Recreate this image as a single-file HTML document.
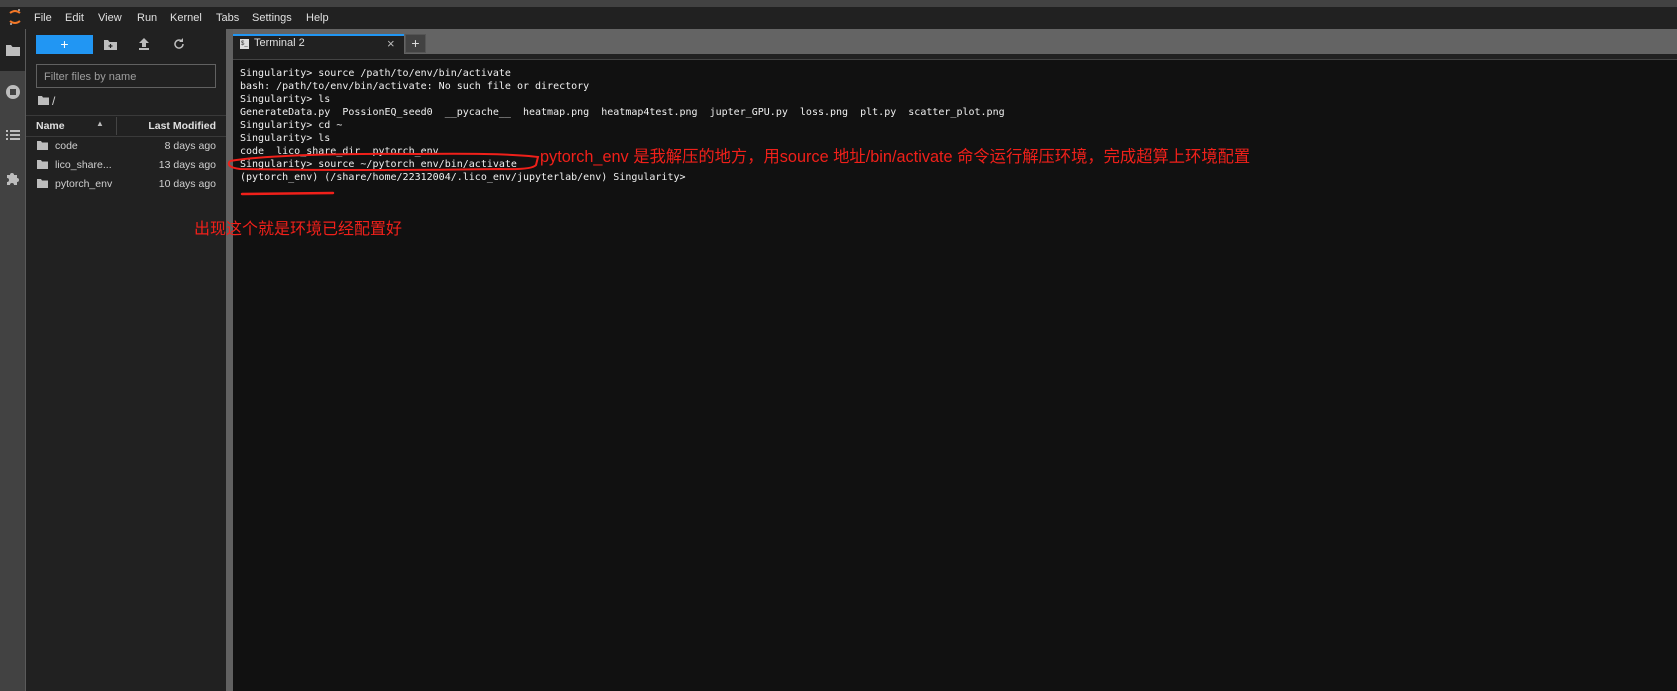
<!DOCTYPE html>
<html><head><meta charset="utf-8"><style>
*{margin:0;padding:0;box-sizing:border-box}
body{width:1677px;height:691px;overflow:hidden;background:#111;font-family:"Liberation Sans","Noto Sans CJK SC",sans-serif;position:relative}
.a{position:absolute}
.menu span{position:absolute;top:12px;font-size:11px;color:#e0e0e0}
.term{position:absolute;left:240px;top:67px;font-family:"DejaVu Sans Mono","Liberation Mono",monospace;font-size:10px;line-height:13px;color:#f0f0f0;white-space:pre}
.f{position:absolute;font-size:10.5px;color:#d0d0d0}
.red{color:#f0201a;position:absolute;font-family:"Liberation Sans","Noto Sans CJK SC",sans-serif;white-space:nowrap}
</style></head><body>
<div class="a" style="left:0;top:0;width:1677px;height:7px;background:#424242"></div>
<div class="a" style="left:0;top:7px;width:1677px;height:22px;background:#212121"></div>
<svg class="a" style="left:8px;top:8px" width="14" height="18" viewBox="0 0 14 18"><path d="M2 5 Q7 1 12 5" stroke="#f37726" stroke-width="2" fill="none"/><path d="M2 13 Q7 17 12 13" stroke="#f37726" stroke-width="2" fill="none"/><circle cx="11" cy="2" r="1" fill="#bbb"/><circle cx="3" cy="16" r="1" fill="#bbb"/></svg>
<div class="menu"><span style="left:34px">File</span><span style="left:65px">Edit</span><span style="left:98px">View</span><span style="left:137px">Run</span><span style="left:170px">Kernel</span><span style="left:216px">Tabs</span><span style="left:252px">Settings</span><span style="left:306px">Help</span></div>
<div class="a" style="left:0;top:29px;width:25px;height:662px;background:#424242"></div>
<div class="a" style="left:0;top:29px;width:25px;height:42px;background:#212121"></div>
<div class="a" style="left:25px;top:29px;width:1px;height:662px;background:#5a5a5a"></div>
<svg class="a" style="left:6px;top:44px" width="14" height="12"><path d="M0 1h5l1.5 2H14v9H0z" fill="#bdbdbd"/></svg>
<svg class="a" style="left:5px;top:84px" width="16" height="16"><circle cx="8" cy="8" r="7" fill="#bdbdbd"/><rect x="5" y="5" width="6" height="6" fill="#424242"/></svg>
<svg class="a" style="left:6px;top:129px" width="14" height="12" fill="#bdbdbd"><rect x="0" y="1" width="2" height="2"/><rect x="4" y="1" width="10" height="2"/><rect x="0" y="5" width="2" height="2"/><rect x="4" y="5" width="10" height="2"/><rect x="0" y="9" width="2" height="2"/><rect x="4" y="9" width="10" height="2"/></svg>
<svg class="a" style="left:5px;top:171px" width="15" height="15" fill="#bdbdbd"><path d="M2 4h3a2 2 0 1 1 4 0h3v3a2 2 0 1 1 0 4v3H9a2 2 0 1 0-4 0H2v-3a2 2 0 1 0 0-4z"/></svg>
<div class="a" style="left:26px;top:29px;width:201px;height:662px;background:#212121"></div>
<div class="a" style="left:36px;top:35px;width:57px;height:19px;background:#2196f3;color:#fff;font-size:14px;text-align:center;line-height:19px">+</div>
<svg class="a" style="left:104px;top:39px" width="13" height="11"><path d="M0 1h4l1.5 2H13v8H0z" fill="#bdbdbd"/><path d="M6.5 5v4M4.5 7h4" stroke="#212121" stroke-width="1.2"/></svg>
<svg class="a" style="left:139px;top:38px" width="10" height="12"><path d="M5 0L0 5h3v4h4V5h3z M0 10h10v2H0z" fill="#bdbdbd"/></svg>
<svg class="a" style="left:173px;top:38px" width="12" height="12"><path d="M10 6a4 4 0 1 1-1.2-2.8" stroke="#bdbdbd" stroke-width="1.5" fill="none"/><path d="M10 0v4H6z" fill="#bdbdbd"/></svg>
<div class="a" style="left:36px;top:64px;width:180px;height:24px;border:1px solid #616161;color:#9e9e9e;font-size:11px;padding:6px 7px">Filter files by name</div>
<svg class="a" style="left:38px;top:96px" width="11" height="9"><path d="M0 0h4l1 1.5H11V9H0z" fill="#bdbdbd"/></svg>
<div class="f" style="left:52px;top:94px;font-size:12px">/</div>
<div class="a" style="left:26px;top:115px;width:201px;height:1px;background:#3a3a3a"></div>
<div class="a" style="left:26px;top:136px;width:201px;height:1px;background:#3a3a3a"></div>
<div class="f" style="left:36px;top:120px;font-weight:bold;color:#e0e0e0">Name</div>
<div class="f" style="left:96px;top:119px;font-size:8px;color:#bbb">▲</div>
<div class="a" style="left:116px;top:117px;width:1px;height:18px;background:#444"></div>
<div class="f" style="left:120px;top:120px;width:96px;text-align:right;font-weight:bold;color:#e0e0e0">Last Modified</div>
<svg class="a" style="left:37px;top:141px" width="11" height="9"><path d="M0 0h4l1 1.5H11V9H0z" fill="#bdbdbd"/></svg>
<div class="f" style="left:55px;top:140px">code</div><div class="f" style="left:120px;top:140px;width:96px;text-align:right">8 days ago</div>
<svg class="a" style="left:37px;top:160px" width="11" height="9"><path d="M0 0h4l1 1.5H11V9H0z" fill="#bdbdbd"/></svg>
<div class="f" style="left:55px;top:159px">lico_share...</div><div class="f" style="left:120px;top:159px;width:96px;text-align:right">13 days ago</div>
<svg class="a" style="left:37px;top:179px" width="11" height="9"><path d="M0 0h4l1 1.5H11V9H0z" fill="#bdbdbd"/></svg>
<div class="f" style="left:55px;top:178px">pytorch_env</div><div class="f" style="left:120px;top:178px;width:96px;text-align:right">10 days ago</div>
<div class="a" style="left:226px;top:29px;width:7px;height:662px;background:#616161"></div>
<div class="a" style="left:233px;top:29px;width:1444px;height:25px;background:#646464"></div>
<div class="a" style="left:233px;top:54px;width:1444px;height:5px;background:#212121"></div>
<div class="a" style="left:233px;top:59px;width:1444px;height:1px;background:#444"></div>
<div class="a" style="left:233px;top:34px;width:171px;height:25px;background:#212121;border-top:2px solid #2196f3"></div>
<div class="a" style="left:240px;top:39px;width:9px;height:10px;background:#ddd;font-size:6px;color:#333;line-height:10px;padding-left:1px">$_</div>
<div class="a" style="left:254px;top:37px;font-size:11px;color:#e0e0e0">Terminal 2</div>
<div class="a" style="left:387px;top:36px;font-size:13px;color:#bbb">×</div>
<div class="a" style="left:405px;top:34px;width:21px;height:19px;background:#424242;border:1px solid #555;color:#ddd;font-size:14px;text-align:center;line-height:16px">+</div>
<div class="term">Singularity> source /path/to/env/bin/activate
bash: /path/to/env/bin/activate: No such file or directory
Singularity> ls
GenerateData.py  PossionEQ_seed0  __pycache__  heatmap.png  heatmap4test.png  jupter_GPU.py  loss.png  plt.py  scatter_plot.png
Singularity> cd ~
Singularity> ls
code  lico_share_dir  pytorch_env
Singularity> source ~/pytorch_env/bin/activate
(pytorch_env) (/share/home/22312004/.lico_env/jupyterlab/env) Singularity></div>
<svg class="a" style="left:220px;top:145px" width="330" height="60"><path d="M10 16 Q60 8 200 9 Q290 8 318 12 L316 20 Q312 25 280 24 Q150 26 20 24 Q5 22 10 16" stroke="#f0201a" stroke-width="2" fill="none"/><path d="M22 49 L113 48" stroke="#f0201a" stroke-width="2.5" stroke-linecap="round"/></svg>
<div class="red" style="left:540px;top:143px;font-size:16.3px">pytorch_env 是我解压的地方，用source 地址/bin/activate 命令运行解压环境，完成超算上环境配置</div>
<div class="red" style="left:194px;top:215px;font-size:16px">出现这个就是环境已经配置好</div>
</body></html>
